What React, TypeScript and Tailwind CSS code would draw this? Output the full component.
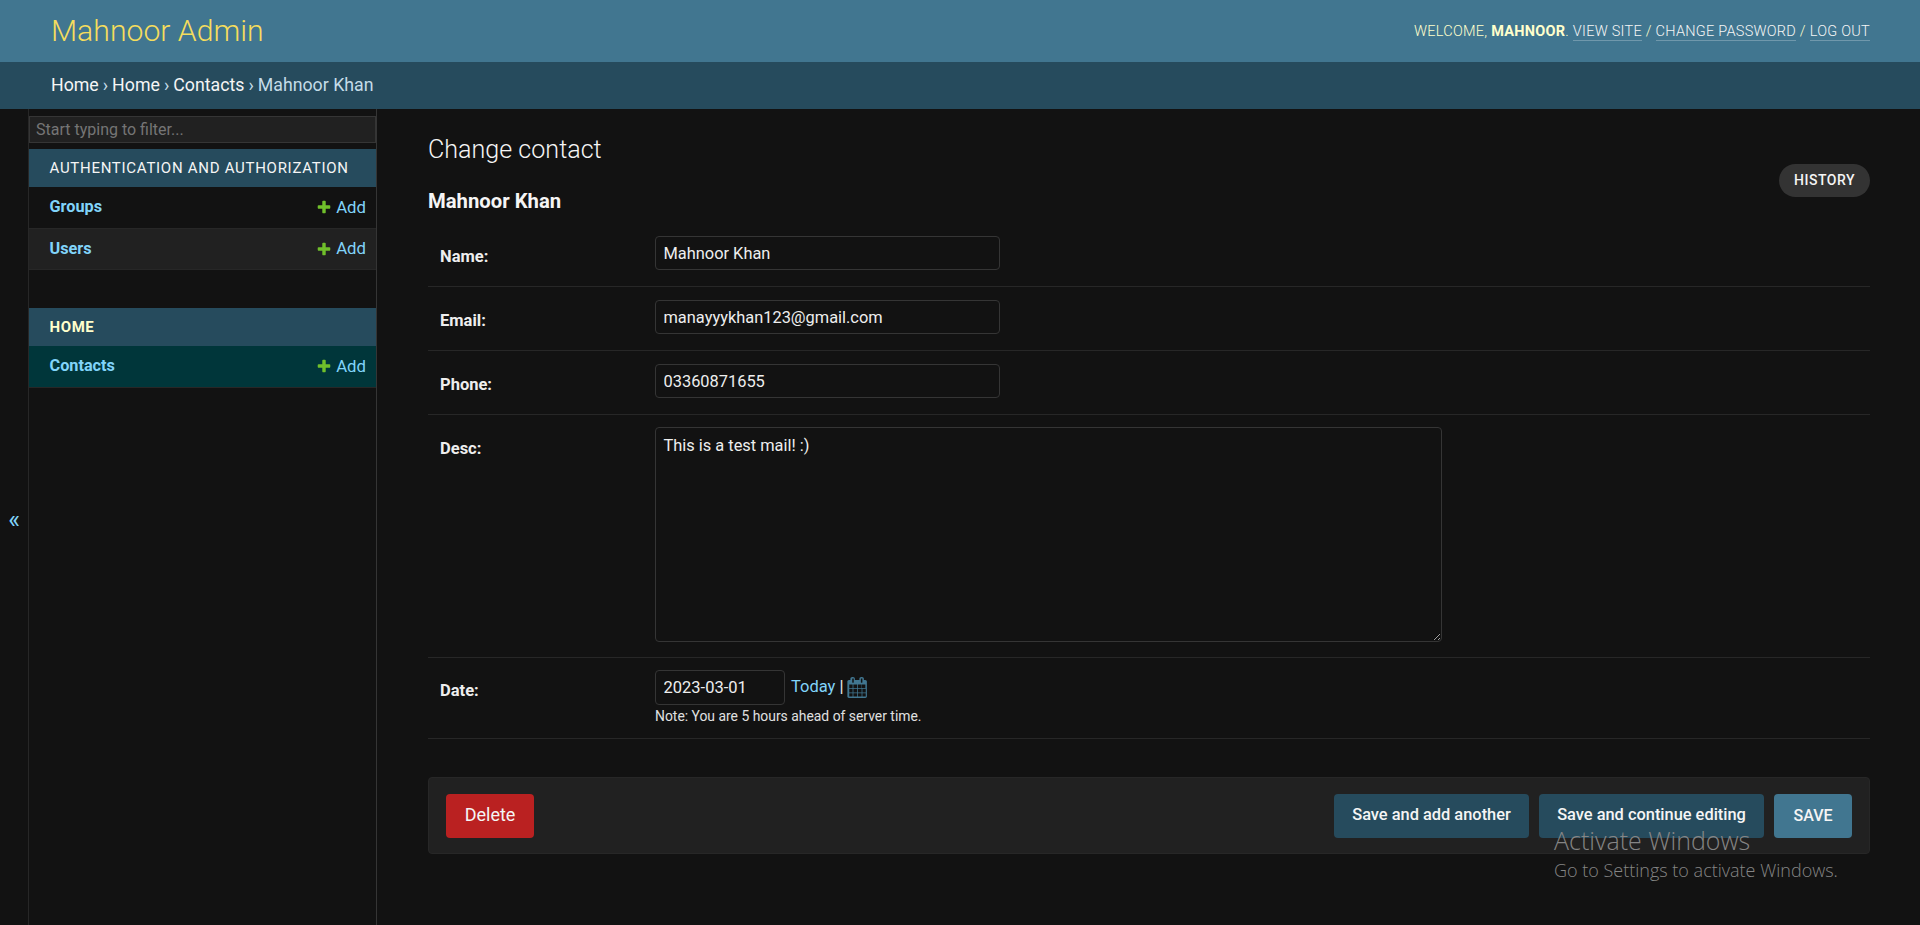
import React from "react";

const PLUS =
  "M1600 796v192q0 40-28 68t-68 28h-416v416q0 40-28 68t-68 28h-192q-40 0-68-28t-28-68v-416h-416q-40 0-68-28t-28-68v-192q0-40 28-68t68-28h416v-416q0-40 28-68t68-28h192q40 0 68 28t28 68v416h416q40 0 68 28t28 68z";
const CALENDAR =
  "M192 1664h288v-288h-288v288zm352 0h320v-288h-320v288zm-352-352h288v-320h-288v320zm352 0h320v-320h-320v320zm-352-384h288v-288h-288v288zm736 736h320v-288h-320v288zm-384-736h320v-288h-320v288zm768 736h288v-288h-288v288zm-384-352h320v-320h-320v320zm-352-864v-288q0-13-9.5-22.5t-22.5-9.5h-64q-13 0-22.5 9.5t-9.5 22.5v288q0 13 9.5 22.5t22.5 9.5h64q13 0 22.5-9.5t9.5-22.5zm736 864h288v-320h-288v320zm-384-384h320v-288h-320v288zm352 0h288v-288h-288v288zm32-480v-288q0-13-9.5-22.5t-22.5-9.5h-64q-13 0-22.5 9.5t-9.5 22.5v288q0 13 9.5 22.5t22.5 9.5h64q13 0 22.5-9.5t9.5-22.5zm384-64v1280q0 52-38 90t-90 38h-1408q-52 0-90-38t-38-90v-1280q0-52 38-90t90-38h128v-96q0-66 47-113t113-47h64q66 0 113 47t47 113v96h384v-96q0-66 47-113t113-47h64q66 0 113 47t47 113v96h128q52 0 90 38t38 90z";

const NavRow = ({ name, bg }: { name: string; bg: string }) => (
  <div className={`flex h-[41.5px] items-center justify-between border-b border-[#272727] pl-[20.5px] pr-[10px] ${bg}`}>
    <a className="text-[16.25px] font-bold text-[#81d4fa]">{name}</a>
    <a className="flex items-center gap-[4px] text-[16.75px] text-[#81d4fa]">
      <svg viewBox="0 0 1792 1792" className="h-[16px] w-[16px] fill-[#70bf2b]">
        <path d={PLUS} />
      </svg>
      Add
    </a>
  </div>
);

const Field = ({ label, value }: { label: string; value: string }) => (
  <div className="flex h-[64px] border-b border-[#272727] pl-3 pt-[13px]">
    <label className="w-[215px] pt-[9px] text-[16.5px] font-bold text-[#eee]">{label}</label>
    <input
      defaultValue={value}
      className="h-[34px] w-[345px] rounded-[4px] border border-[#353535] bg-[#121212] px-[7.5px] text-[16.4px] text-[#eee] outline-none"
    />
  </div>
);

export default function App() {
  return (
    <div className="relative flex h-[925px] flex-col overflow-hidden bg-[#121212] font-['Roboto',sans-serif] text-[#eee]">
      <header className="flex h-[62px] shrink-0 items-center justify-between bg-[#417690] pl-[51px] pr-[50px]">
        <h1 className="text-[30.2px] font-light text-[#f5dd5d]">Mahnoor Admin</h1>
        <div className="pt-[1px] text-[14.5px] font-light uppercase tracking-[0.26px] text-[#ffc]">
          Welcome, <strong className="font-bold">Mahnoor</strong>.{" "}
          <a className="border-b border-white/25 text-[#f5f5f5]">View site</a> /{" "}
          <a className="border-b border-white/25 text-[#f5f5f5]">Change password</a> /{" "}
          <a className="border-b border-white/25 text-[#f5f5f5]">Log out</a>
        </div>
      </header>

      <div className="flex h-[47px] shrink-0 items-center bg-[#264b5d] pl-[51px] text-[17.75px] text-[#c4dce8]">
        <a className="text-[#f5f5f5]">Home</a>
        <span className="px-[4px]">›</span>
        <a className="text-[#f5f5f5]">Home</a>
        <span className="px-[4px]">›</span>
        <a className="text-[#f5f5f5]">Contacts</a>
        <span className="px-[4px]">›</span>
        <span>Mahnoor Khan</span>
      </div>

      <div className="flex min-h-0 flex-1">
        <button className="flex w-[29px] shrink-0 items-center justify-center border-r border-[#272727] pt-[5px] text-[25px] text-[#81d4fa]">
          «
        </button>

        <nav className="w-[348px] shrink-0 border-r border-[#353535] pt-[7px]">
          <input
            placeholder="Start typing to filter..."
            className="block h-[27px] w-full border border-[#353535] bg-[#212121] px-[6px] text-[16px] text-[#eee] outline-none placeholder:text-[#757575]"
          />
          <div className="mt-[6px] flex h-[38px] items-center bg-[#264b5d] pl-[20.5px] text-[15px] font-normal uppercase tracking-[0.72px] text-[#f5f5f5]">
            Authentication and Authorization
          </div>
          <NavRow name="Groups" bg="bg-[#121212]" />
          <NavRow name="Users" bg="bg-[#212121]" />
          <div className="mt-[38px] flex h-[38px] items-center bg-[#264b5d] pl-[20.5px] text-[15px] font-bold uppercase tracking-[0.6px] text-[#ffc]">
            Home
          </div>
          <NavRow name="Contacts" bg="bg-[#00363a]" />
        </nav>

        <main className="min-w-0 flex-1 pl-[51px] pr-[50px]">
          <div className="flex items-start justify-between">
            <div>
              <h1 className="mt-[25px] text-[25.1px] font-light leading-[32px] text-[#f5f5f5]">Change contact</h1>
              <h2 className="mt-[22px] text-[20.3px] font-bold leading-[26px] text-[#f5f5f5]">Mahnoor Khan</h2>
            </div>
            <a className="mt-[55px] flex h-[33px] w-[91px] items-center justify-center rounded-full bg-[#333] text-[14px] font-medium uppercase tracking-[0.5px] text-[#f5f5f5]">
              History
            </a>
          </div>

          <div className="mt-[9px]">
            <Field label="Name:" value="Mahnoor Khan" />
            <Field label="Email:" value="manayyykhan123@gmail.com" />
            <Field label="Phone:" value="03360871655" />
            <div className="flex border-b border-[#272727] pb-[15px] pl-3 pt-[12px]">
              <label className="w-[215px] pt-[10px] text-[16.5px] font-bold text-[#eee]">Desc:</label>
              <textarea
                defaultValue="This is a test mail! :)"
                className="h-[215px] w-[787px] rounded-[4px] border border-[#353535] bg-[#121212] px-[7.5px] py-[6px] text-[16.4px] text-[#eee] outline-none"
              />
            </div>
            <div className="flex h-[81px] border-b border-[#272727] pl-3 pt-[12px]">
              <label className="w-[215px] pt-[9px] text-[16.5px] font-bold text-[#eee]">Date:</label>
              <div>
                <div className="flex items-center">
                  <input
                    defaultValue="2023-03-01"
                    className="h-[35px] w-[130px] rounded-[4px] border border-[#353535] bg-[#121212] px-[7.5px] text-[16.5px] text-[#eee] outline-none"
                  />
                  <a className="ml-[6px] text-[16.5px] text-[#81d4fa]">Today</a>
                  <span className="ml-[4px] text-[16.5px]">|</span>
                  <svg viewBox="0 0 1792 1792" className="ml-[4px] h-[21px] w-[21px] fill-[#417690]">
                    <path d={CALENDAR} />
                  </svg>
                </div>
                <p className="mt-[1px] text-[13.9px] text-[#e0e0e0]">Note: You are 5 hours ahead of server time.</p>
              </div>
            </div>
          </div>

          <div className="mt-[38px] flex h-[77px] items-center justify-between rounded-[4px] border border-[#272727] bg-[#212121] pl-[17px] pr-[17px]">
            <a className="flex h-[44px] w-[88px] items-center justify-center rounded-[4px] bg-[#ba2121] pb-[2px] text-[18px] text-[#f5f5f5]">
              Delete
            </a>
            <div className="flex gap-[10px]">
              <button className="h-[44px] w-[195px] rounded-[4px] bg-[#264b5d] text-[16.4px] font-medium text-[#f5f5f5]">
                Save and add another
              </button>
              <button className="h-[44px] w-[225px] rounded-[4px] bg-[#264b5d] text-[16.4px] font-medium text-[#f5f5f5]">
                Save and continue editing
              </button>
              <button className="h-[44px] w-[78px] rounded-[4px] bg-[#417690] text-[16px] font-medium uppercase text-[#f5f5f5]">
                Save
              </button>
            </div>
          </div>
        </main>
      </div>

      <div className="pointer-events-none absolute left-[1554px] top-[825px] font-['Open_Sans',sans-serif] font-light text-[#858585]">
        <div className="text-[25px] leading-[31px]">Activate Windows</div>
        <div className="mt-[3px] text-[18px] leading-[22px]">Go to Settings to activate Windows.</div>
      </div>
    </div>
  );
}
